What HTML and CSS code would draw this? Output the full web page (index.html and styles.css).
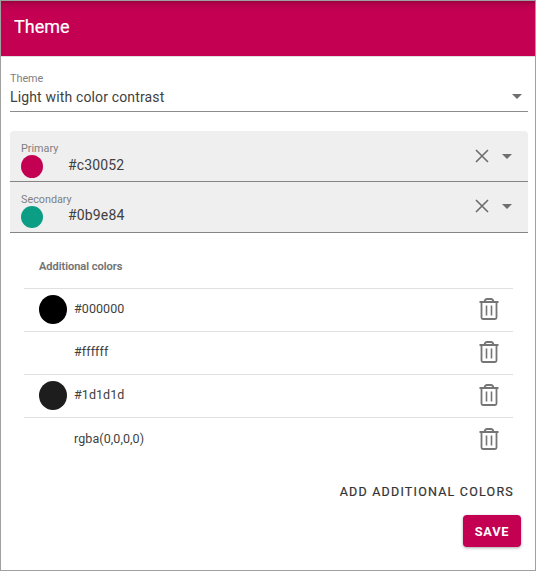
FILE: index.html
```html
<!DOCTYPE html>
<html lang="en">
<head>
<meta charset="utf-8">
<title>Theme</title>
<link rel="stylesheet" href="styles.css">
</head>
<body>
<svg width="0" height="0" class="defs">
  <symbol id="clear" viewBox="0 0 14 14"><path d="M1 1 13 13M13 1 1 13" fill="none" stroke="#6c6c6c" stroke-width="1.6"/></symbol>
  <symbol id="arrow" viewBox="0 0 10 5"><path d="M0 0H10L5 5Z" fill="#6f6f6f"/></symbol>
  <symbol id="trash" viewBox="0 0 20 22"><path d="M.5 4H19.500M2.500 4V19.500Q2.500 21 4 21H16Q17.500 21 17.500 19.500V4M5.500 4Q6 1 8 1H12Q14 1 14.500 4" fill="none" stroke="#757575" stroke-width="1.8"/><path d="M7.500 7.500V17.500M12.500 7.500V17.500" fill="none" stroke="#757575" stroke-width="1.600"/></symbol>
</svg>
<main class="panel">
  <header class="header"><h1 class="title">Theme</h1></header>
  <section class="select">
    <div class="select-text">
      <div class="label">Theme</div>
      <div class="select-value">Light with color contrast</div>
    </div>
    <svg class="arrow"><use href="#arrow"/></svg>
  </section>
  <section class="fields">
    <div class="field">
      <div class="field-text">
        <div class="label">Primary</div>
        <div class="field-row"><span class="dot primary"></span><span class="value">#c30052</span></div>
      </div>
      <svg class="clear"><use href="#clear"/></svg>
      <svg class="arrow"><use href="#arrow"/></svg>
    </div>
    <div class="field second">
      <div class="field-text">
        <div class="label">Secondary</div>
        <div class="field-row"><span class="dot secondary"></span><span class="value">#0b9e84</span></div>
      </div>
      <svg class="clear"><use href="#clear"/></svg>
      <svg class="arrow"><use href="#arrow"/></svg>
    </div>
  </section>
  <section class="table">
    <h2 class="table-head">Additional colors</h2>
    <div class="row"><span class="swatch black"></span><span class="name">#000000</span><svg class="trash"><use href="#trash"/></svg></div>
    <div class="row"><span class="swatch"></span><span class="name">#ffffff</span><svg class="trash"><use href="#trash"/></svg></div>
    <div class="row"><span class="swatch dark"></span><span class="name">#1d1d1d</span><svg class="trash"><use href="#trash"/></svg></div>
    <div class="row last"><span class="swatch"></span><span class="name">rgba(0,0,0,0)</span><svg class="trash"><use href="#trash"/></svg></div>
  </section>
  <footer class="actions">
    <button class="add">ADD ADDITIONAL COLORS</button>
    <button class="save">SAVE</button>
  </footer>
</main>
</body>
</html>
```
FILE: styles.css
```css
* { box-sizing: border-box; }
body { margin: 0; background: #fff; font-family: Roboto, sans-serif; color: #3f3f3f; }
.defs { position: absolute; }
svg { display: block; flex: none; }
.panel { width: 536px; height: 571px; border: 1px solid #a0a0a0; overflow: hidden; }
.header {
  height: 56px; padding: 0 13px; display: flex; align-items: center;
  background: linear-gradient(#96043f 0, #b3014b 3px, #c30052 9px);
  border-bottom: 1px solid #dedede;
}
.title { margin: 0; padding-bottom: 3px; font-size: 18px; line-height: 24px; font-weight: 400; letter-spacing: 0; -webkit-text-stroke: .2px #fff; color: #fff; }
.label { padding-top: 1px; font-size: 10.800px; line-height: 13px; color: #7f7f7f; }
.select {
  margin: 14px 7px 0 9px; height: 41px; border-bottom: 1px solid #8c8c8c;
  display: flex; justify-content: space-between; padding-right: 6px;
}
.select-value { font-size: 14px; line-height: 18px; margin-top: 3px; letter-spacing: .15px; }
.arrow { width: 10px; height: 5px; }
.select .arrow { margin-top: 23px; }
.fields { margin: 19px 7px 0 9px; border-radius: 4px 4px 0 0; overflow: hidden; background: #efefef; }
.field { height: 51px; padding: 10px 16px 0 11px; border-bottom: 1px solid #858585; display: flex; }
.field-text { flex: 1; }
.field-row { display: flex; align-items: flex-start; }
.dot { width: 22px; height: 23px; border-radius: 50%; }
.second .dot { height: 22px; }
.primary { background: #c30052; }
.secondary { background: #0b9e84; }
.value { margin-left: 25px; font-size: 14px; line-height: 20px; letter-spacing: .15px; }
.second .value { margin-top: -1px; }
.clear { width: 14px; height: 14px; margin: 8px 13px 0 0; }
.field .arrow { margin-top: 13px; }
.second .clear { margin-top: 7px; }
.second .arrow { margin-top: 12px; }
.table { margin: 0 22px 0 23px; }
.table-head { margin: 0; height: 55px; padding: 26px 0 0 15px; font-size: 11px; line-height: 16px; font-weight: 500; -webkit-text-stroke: .15px #707070; color: #707070; }
.row { height: 43px; border-top: 1px solid #e0e0e0; display: flex; align-items: flex-start; padding: 6px 14px 0 15px; }
.last { height: 44px; padding-top: 7px; }
.swatch { width: 28px; height: 29px; border-radius: 50%; }
.black { background: #000; }
.dark { background: #1d1d1d; }
.name { flex: 1; margin: 5px 0 0 7px; font-size: 12.500px; line-height: 18px; letter-spacing: .08px; }
.trash { width: 20px; height: 22px; margin-top: 3px; }
.actions { display: flex; flex-direction: column; align-items: flex-end; padding: 21px 14px 0; }
button { border: 0; background: none; padding: 0; font-family: inherit; font-weight: 500; }
.add { height: 20px; margin-right: 6px; font-size: 12.500px; line-height: 20px; font-weight: 400; -webkit-text-stroke: .2px #333; letter-spacing: 1.22px; margin-right: 7px; color: #333; }
.save { width: 58px; height: 32px; margin-top: 13px; border-radius: 4px; background: #c30052; color: #fff; font-size: 12.800px; font-weight: 700; letter-spacing: .8px; box-shadow: 0 1px 3px rgba(0,0,0,.35); }
```
